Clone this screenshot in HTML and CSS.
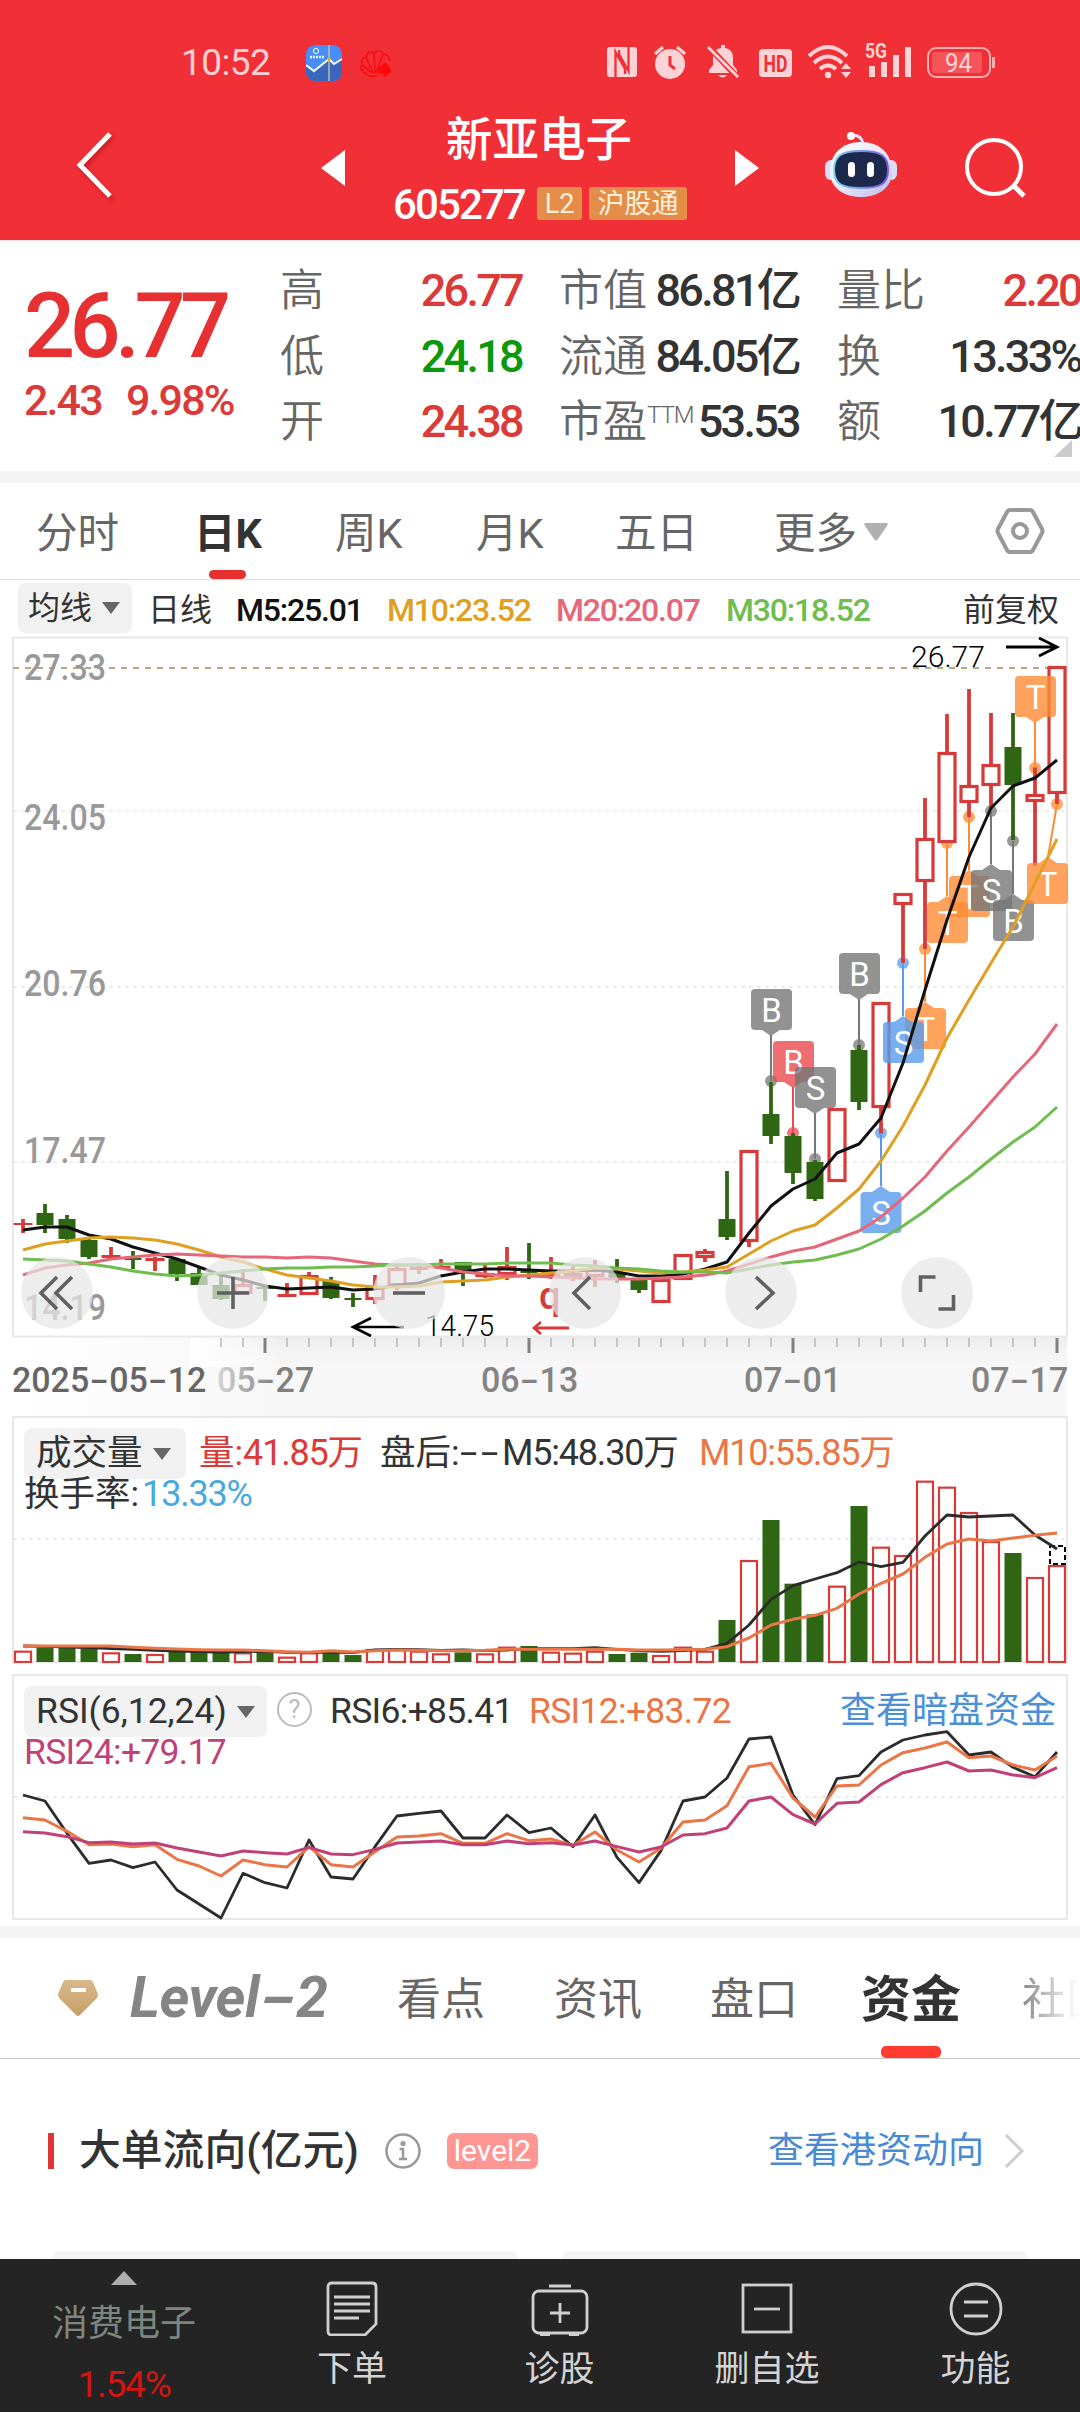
FILE: index.html
```html
<!DOCTYPE html>
<html lang="zh-CN">
<head>
<meta charset="utf-8">
<title>新亚电子 605277</title>
<link rel="stylesheet" href="styles.css">
</head>
<body>
<header class="top">
  <div class="status">
    <span class="clock">10:52</span>
    <svg class="app-icon" viewBox="0 0 36 36"><defs><clipPath id="rc"><rect width="36" height="36" rx="9"/></clipPath></defs><g clip-path="url(#rc)"><rect width="36" height="36" fill="#4a8df5"/><path d="M0 21l8 7 14-14 6 4 8-5v23H0z" fill="#3a66bb"/><path d="M0 20l8 6 15-12 5 5 8-5" fill="none" stroke="#fff" stroke-width="1.8"/><path d="M23 0v36" stroke="#d8d0a0" stroke-width="1.2"/></g><circle cx="10" cy="6" r="2.600" fill="none" stroke="#fff"/><path d="M4 12h14" stroke="#dff" stroke-width="2.400" stroke-dasharray="2 1"/><circle cx="23" cy="14" r="1.800" fill="#e8a030"/></svg>
    <svg class="fan-icon" viewBox="0 0 34 28"><g fill="none" stroke="#f80d12" stroke-width="1.700"><path d="M9 25C3 22 0 18 3 15l10 8M3 15c-1-5 1-8 4-8l7 16M7 7c1-5 5-6 8-4l1 20M15 3c4-3 8-2 9 1l-7 19M24 4c4 0 6 3 7 7M9 26h10"/></g><path d="M26 12c4 4 6 6 6 9 0 4-4 4-5 2l1 4h-4l1-4c-1 2-6 2-6-2 0-3 3-5 7-9z" fill="#ff0808"/></svg>
    <svg class="sys-icons" viewBox="0 0 400 40" fill="#ffd3d5">
      <rect x="2" y="6" width="30" height="30" rx="3"/><path d="M10.500 36V11l9.500 17v5M23.500 6v24L14 13V9" fill="none" stroke="#ef3038" stroke-width="2.300"/>
      <circle cx="65" cy="23" r="15"/><path d="M50 13l8-7M72 6l8 7" stroke="#ffd3d5" stroke-width="3"/><path d="M65 15v9l5 4" fill="none" stroke="#ef3038" stroke-width="3"/>
      <path d="M104 32v-3l4-5V17q0-9 8-10V4h4v3q8 1 8 10v7l4 5v3zM113 34h9q-4 5-9 0z"/><path d="M105 7l28 30" stroke="#f02f37" stroke-width="6"/><path d="M103 6l30 30" stroke="#ffd3d5" stroke-width="2.6"/>
      <rect x="154" y="8" width="33" height="28" rx="4"/><text x="158.500" y="31" textLength="24" lengthAdjust="spacingAndGlyphs" font-size="23" font-weight="700" fill="#ee3038">HD</text>
      <g fill="none" stroke="#ffd3d5" stroke-width="4"><path d="M204 15q19-18 38 0M209 22q14-13 28 0M215 28q8-7 16 0"/></g><circle cx="223" cy="34" r="3.200"/><path d="M236 28l5-6 5 6zM236 31h10l-5 6z"/>
      <text x="260" y="17" textLength="22" lengthAdjust="spacingAndGlyphs" font-size="20" font-weight="700">5G</text>
      <path d="M264 25h6v11h-6zM276 21h6v15h-6zM288 14h6v22h-6zM300 6h6v30h-6z"/>
      <rect x="323" y="7" width="62" height="29" rx="8" fill="none" stroke="#f9aeb1" stroke-width="2"/><rect x="327" y="11" width="50" height="21" rx="3" fill="#f6545b"/><path d="M387 16h3v11h-3z" fill="#f9aeb1"/>
      <text x="340" y="31" textLength="27" lengthAdjust="spacingAndGlyphs" font-size="25">94</text>
    </svg>
  </div>
  <div class="titlebar">
    <svg class="back" viewBox="0 0 40 68"><path d="M36 3L6 34l30 31" fill="none" stroke="#fff" stroke-width="5"/></svg>
    <svg class="arrow" viewBox="0 0 24 36"><path d="M24 0v36L0 18z" fill="#fff"/></svg>
    <div class="stock">
      <div class="name">新亚电子</div>
      <div class="code"><b>605277</b><i class="l2">L2</i><i class="hgt">沪股通</i></div>
    </div>
    <svg class="arrow next" viewBox="0 0 24 36"><path d="M0 0v36l24-18z" fill="#fff"/></svg>
    <svg class="robot" viewBox="0 0 72 68"><defs><linearGradient id="shell" x1="0" y1="0" x2="1" y2="1"><stop offset="0" stop-color="#fff"/><stop offset=".5" stop-color="#e9e8fb"/><stop offset="1" stop-color="#bcb9e8"/></linearGradient><linearGradient id="edge"><stop offset="0" stop-color="#79d5ef"/><stop offset="1" stop-color="#7554de"/></linearGradient></defs><path d="M27 4q10 0 11 9" fill="none" stroke="#e5e2f5" stroke-width="3"/><circle cx="26" cy="5" r="4" fill="#fff"/><rect x="0" y="29" width="72" height="20" rx="6" fill="#dddcf8"/><path d="M36 11C55 11 67 23 67 41 67 56 54 66 36 66S5 56 5 41C5 23 17 11 36 11z" fill="url(#shell)"/><path d="M36 20c20 0 27 5 27 19S55 57 36 57 9 53 9 39s7-19 27-19z" fill="#1c284c" stroke="url(#edge)" stroke-width="2"/><rect x="23" y="31" width="7" height="15" rx="3.500" fill="#fff"/><rect x="42" y="31" width="7" height="15" rx="3.500" fill="#fff"/></svg>
    <svg class="search" viewBox="0 0 62 62"><circle cx="29" cy="30" r="27" fill="none" stroke="#fff" stroke-width="4"/><path d="M48 48l11 11" stroke="#fff" stroke-width="5"/></svg>
  </div>
</header>

<section class="quote">
  <div class="price">
    <div class="last">26.77</div>
    <div class="chg"><span>2.43</span><span>9.98%</span></div>
  </div>
  <dl class="col c1">
    <div><dt>高</dt><dd class="up">26.77</dd></div>
    <div><dt>低</dt><dd class="down">24.18</dd></div>
    <div><dt>开</dt><dd class="up">24.38</dd></div>
  </dl>
  <dl class="col c2">
    <div><dt>市值</dt><dd>86.81亿</dd></div>
    <div><dt>流通</dt><dd>84.05亿</dd></div>
    <div><dt>市盈<sup>TTM</sup></dt><dd>53.53</dd></div>
  </dl>
  <dl class="col c3">
    <div><dt>量比</dt><dd class="up">2.20</dd></div>
    <div><dt>换</dt><dd>13.33%</dd></div>
    <div><dt>额</dt><dd>10.77亿</dd></div>
  </dl>
  <svg class="corner" viewBox="0 0 18 17"><path d="M18 0v17H0z" fill="#ccc"/></svg>
</section>

<nav class="periods">
  <span>分时</span><span class="on">日K</span><span>周K</span><span>月K</span><span>五日</span>
  <span class="more">更多<svg viewBox="0 0 24 18"><path d="M2 0h20q3 0 1 3l-9 13q-2 3-4 0L1 3q-2-3 1-3z" fill="#b0b0b0"/></svg></span>
  <svg class="hex" viewBox="0 0 50 48"><path d="M15 3h20q2 0 3 2l9 17q1 2 0 4l-9 17q-1 2-3 2H15q-2 0-3-2L3 26q-1-2 0-4l9-17q1-2 3-2z" fill="none" stroke="#999" stroke-width="4"/><circle cx="25" cy="24" r="7" fill="none" stroke="#999" stroke-width="4"/></svg>
</nav>

<div class="ma">
  <span class="pick">均线<svg viewBox="0 0 18 12"><path d="M0 0h18L9 12z" fill="#666"/></svg></span>
  <span class="day">日线</span>
  <span class="m5">M5:25.01</span><span class="m10">M10:23.52</span><span class="m20">M20:20.07</span><span class="m30">M30:18.52</span>
  <span class="adj">前复权</span>
</div>

<section class="kline"><svg id="kline" width="1080" height="780" viewBox="0 636 1080 780"></svg></section>

<section class="panel vol">
  <svg id="volume" width="1080" height="258" viewBox="0 1416 1080 258"></svg>
  <div class="legend">
    <div class="line"><span class="pick">成交量<svg viewBox="0 0 18 12"><path d="M0 0h18L9 12z" fill="#666"/></svg></span><span class="v1">量:<em>41.85</em>万</span><span class="v2">盘后:<em class="dash">--</em></span><span class="v3"><em>M5:48.30</em>万</span><span class="v4"><em>M10:55.85</em>万</span></div>
    <div class="line2">换手率:<em class="rate">13.33%</em></div>
  </div>
</section>

<section class="panel rsi">
  <svg id="rsi" width="1080" height="252" viewBox="0 1674 1080 252"></svg>
  <div class="legend">
    <div class="line"><span class="pick">RSI(6,12,24)<svg viewBox="0 0 18 12"><path d="M0 0h18L9 12z" fill="#666"/></svg></span><span class="help">?</span><span class="r1">RSI6:+85.41</span><span class="r2">RSI12:+83.72</span><span class="dark">查看暗盘资金</span></div>
    <div class="line2 r3">RSI24:+79.17</div>
  </div>
</section>

<nav class="tabs">
  <svg class="gem" viewBox="0 0 40 36"><defs><linearGradient id="gold" x2="0" y2="1"><stop stop-color="#d9b98c"/><stop offset="1" stop-color="#c69f66"/></linearGradient></defs><path d="M8 0h24q2 0 3 2l5 12q0 2-1 4L22 35q-2 2-4 0L1 18q-1-2-1-4L5 2q1-2 3-2z" fill="url(#gold)"/><rect x="13" y="8" width="15" height="4" rx="1" fill="#fff"/></svg>
  <span class="lv">Level<em>-</em>2</span><span>看点</span><span>资讯</span><span>盘口</span><span class="on">资金</span><span class="fade">社区</span>
</nav>

<section class="flow">
  <div class="flow-head">
    <span class="mark"></span><h2>大单流向(亿元)</h2>
    <svg class="info" viewBox="0 0 36 36"><circle cx="18" cy="18" r="16.500" fill="none" stroke="#999" stroke-width="2.500"/><circle cx="18" cy="10.500" r="2.600" fill="#999"/><path d="M14.500 16H18v10M14 26h8" fill="none" stroke="#999" stroke-width="2.500"/></svg>
    <span class="badge">level2</span>
    <span class="link">查看港资动向</span>
    <svg class="go" viewBox="0 0 20 34"><path d="M2 1l16 16L2 33" fill="none" stroke="#ccc" stroke-width="3"/></svg>
  </div>
  <div class="cards"><div></div><div></div></div>
</section>

<footer class="bar">
  <div class="sector"><svg viewBox="0 0 26 14"><path d="M13 0l13 14H0z" fill="#aeaeae"/></svg><span>消费电子</span><b>1.54%</b></div>
  <div class="item"><svg viewBox="0 0 60 56"><g fill="none" stroke="#d0d0d0" stroke-width="2.800"><path d="M10 3h40q4 0 4 4v37L43 55H10q-4 0-4-4V7q0-4 4-4z"/><path d="M12 17h36M12 24h36M12 31h36M12 38h25"/></g></svg><span>下单</span></div>
  <div class="item"><svg viewBox="0 0 60 56"><g fill="none" stroke="#d0d0d0" stroke-width="2.800"><rect x="3" y="11" width="54" height="42" rx="6"/><path d="M19 6h22M30 23v20M20 33h20"/><path d="M10 54h10M39 54h10" stroke-width="4"/></g></svg><span>诊股</span></div>
  <div class="item"><svg viewBox="0 0 60 56"><g fill="none" stroke="#d0d0d0" stroke-width="2.800"><rect x="6" y="5" width="48" height="47"/><path d="M17 29h26"/></g></svg><span>删自选</span></div>
  <div class="item"><svg viewBox="0 0 60 56"><g fill="none" stroke="#d0d0d0" stroke-width="2.800"><circle cx="30" cy="29" r="25"/><path d="M18 22h24M18 36h24"/></g></svg><span>功能</span></div>
</footer>
<script src="charts.js"></script>
</body>
</html>
```
FILE: styles.css
```css
* { box-sizing: border-box; margin: 0; padding: 0; }
body {
  width: 1080px; height: 2412px; overflow: hidden;
  display: flex; flex-direction: column;
  background: #fff; color: #333;
  font-family: Roboto, "Noto Sans CJK SC", sans-serif;
  white-space: nowrap;
}
svg { display: block; }
svg text { font-family: Roboto, "Noto Sans CJK SC", sans-serif; }
em, i { font-style: normal; }

/* red header */
.top { height: 240px; background: #f12f37; color: #fff; flex: none; }
.status { height: 100px; padding-top: 23px; display: grid; grid-template-columns: 181px 125px 53px 246px 400px; align-items: center; }
.clock { grid-column: 2; font-size: 37px; line-height: 80px; color: #ffd0d2; letter-spacing: -.600px; }
.app-icon { width: 36px; height: 36px; }
.fan-icon { width: 34px; height: 28px; margin-top: 2px; }
.sys-icons { width: 400px; height: 40px; margin-top: -4px; }
.titlebar { height: 140px; display: grid; grid-template-columns: 74px 247px 71px 343px 90px 140px 62px; align-items: start; }
.back { grid-column: 2; width: 40px; height: 68px; margin-top: 31px; filter: drop-shadow(2px 3px 2px rgba(120,0,0,.35)); }
.arrow { width: 24px; height: 36px; margin-top: 50px; }
.name { font-size: 46.500px; line-height: 56px; font-weight: 500; padding: 12px 0 0 54px; }
.code { display: flex; align-items: center; margin-top: 19px; height: 33px; }
.code b { font-size: 42px; font-weight: 500; letter-spacing: -1.900px; width: 144px; padding: 2px 0 0 1px; margin-right: 1px; }
.code i { height: 33px; line-height: 34px; border-radius: 3px; background: #e38d49; color: #fff1dc; font-size: 27px; text-align: center; }
.l2 { width: 45px; margin-right: 7px; }
.hgt { width: 98px; }
.robot { width: 72px; height: 68px; margin-top: 31px; }
.search { width: 62px; height: 62px; margin-top: 37px; }

/* quote summary */
.quote { height: 243px; flex: none; border-bottom: 12px solid #f4f4f4; border-top: 1px solid #fde0e1; display: grid; grid-template-columns: 280px 241px 38px 240px 38px 243px; position: relative; }
.last { font-size: 90px; line-height: 90px; font-weight: 500; color: #e63031; letter-spacing: -5.600px; padding: 41px 0 0 24px; }
.chg { display: grid; grid-template-columns: 102px 130px; padding-left: 24px; font-size: 43px; line-height: 50px; font-weight: 500; color: #dc3a38; letter-spacing: -1.900px; margin-top: 3px; }
.col { padding-top: 17px; }
.col div { height: 65.500px; display: flex; justify-content: space-between; line-height: 66px; }
.c2 { grid-column: 4; }
.c3 { grid-column: 6; }
dt { font-size: 44px; color: #666; font-weight: 350; }
dd { font-size: 45px; font-weight: 500; letter-spacing: -2.700px; color: #333; }
.c1 dd, .c3 dd { margin-right: -1px; }
dt sup { font-size: 24px; line-height: 20px; vertical-align: 14px; font-weight: 300; letter-spacing: -1px; }
.up { color: #dc3a38; }
.down { color: #0c980c; }
.corner { position: absolute; right: 8px; bottom: 14px; width: 18px; height: 17px; }

/* period tabs */
.periods { height: 97px; flex: none; border-bottom: 1px solid #ddd; display: grid; grid-template-columns: 36px 158px 141px 141px 139px 159px 221px 50px; font-size: 41.500px; line-height: 101px; color: #666; }
.periods span:first-child { grid-column: 2; }
.periods .on { color: #333; font-weight: 700; width: 70px; position: relative; }
.periods .on::after { content: ""; position: absolute; left: 15px; top: 87px; width: 37px; height: 9px; border-radius: 5px; background: #e63030; }
.more { display: flex; align-items: center; }
.more svg { width: 24px; height: 18px; margin: -4px 0 0 7px; }
.hex { width: 50px; height: 48px; margin-top: 24px; }

/* moving averages */
.ma { height: 56px; flex: none; padding: 3px 0 3px 18px; display: grid; grid-template-columns: 130px 88px 151px 169px 170px 237px 110px; font-size: 32px; line-height: 54px; color: #333; }
.pick { background: #f1f1f1; border-radius: 8px; display: flex; align-items: center; }
.pick svg { width: 18px; height: 12px; margin-left: 10px; }
.ma .pick { width: 114px; height: 50px; padding-left: 10px; }
.ma [class^="m"] { letter-spacing: -1.200px; font-weight: 500; }
.m5 { color: #111; }
.m10 { color: #dfa022; }
.m20 { color: #e5677a; }
.m30 { color: #6fbd4e; }

.kline { height: 780px; flex: none; }

/* indicator panels */
.panel { display: grid; flex: none; }
.panel > * { grid-area: 1 / 1; }
.vol { height: 258px; }
.rsi { height: 252px; }
.legend { padding: 12px 0 0 24px; font-size: 35.500px; }
.line { display: grid; height: 47px; line-height: 51px; }
.vol .line { grid-template-columns: 175px 181px 122px 197px 200px; }
.rsi .line { grid-template-columns: 253px 53px 199px 311px 220px; }
.vol .pick { width: 162px; padding-left: 12px; }
.rsi .pick { width: 243px; padding-left: 12px; }
.vol em { letter-spacing: -1.200px; font-size: 36px; }
.vol .dash { display: inline-block; letter-spacing: 2px; transform: scaleX(1.75); transform-origin: left; }
.v1 { color: #dc3a38; }
.v4, .r2 { color: #ea7647; }
.line2 { line-height: 38px; }
.vol .rate { color: #4aa8e0; margin-left: 3px; }
.help { width: 35px; height: 35px; border: 2.500px solid #bbb; border-radius: 50%; color: #bbb; font-size: 25px; line-height: 31px; text-align: center; margin-top: 6px; }
.r1, .r2, .r3 { letter-spacing: -.700px; }
.r3 { color: #c24078; }
.dark { color: #4a8fd8; font-size: 36px; }

/* content tabs */
.tabs { height: 133px; flex: none; border-top: 12px solid #f4f4f4; border-bottom: 1px solid #c6c6c6; display: grid; grid-template-columns: 58px 72px 267px 157px 156px 151px 161px 58px; font-size: 44px; line-height: 125px; color: #666; }
.gem { grid-column: 2; width: 40px; height: 36px; margin-top: 42px; }
.lv { font-style: italic; font-weight: 700; font-size: 57px; line-height: 120px; color: #858585; letter-spacing: -.500px; }
.lv em { display: inline-block; font-style: italic; transform: scaleX(1.8); transform-origin: left; margin-right: 16px; }
.tabs .on { font-size: 50px; font-weight: 700; color: #333; position: relative; width: 99px; }
.tabs .on::after { content: ""; position: absolute; left: 20px; top: 108px; width: 60px; height: 12px; border-radius: 5px; background: #ff3b30; }
.fade { overflow: hidden; background: linear-gradient(90deg, #888, #eee 80%, #fff); -webkit-background-clip: text; background-clip: text; color: transparent; }

/* capital flow */
.flow { height: 200px; flex: none; display: flex; flex-direction: column; justify-content: space-between; }
.flow-head { display: grid; grid-template-columns: 48px 31px 306px 62px 321px 236px 20px; align-items: center; height: 60px; margin-top: 61px; }
.mark { grid-column: 2; width: 6px; height: 36px; background: #e03535; }
.flow h2 { font-size: 41.800px; font-weight: 500; line-height: 60px; padding-top: 1px; }
.info { width: 36px; height: 36px; }
.badge { width: 91px; height: 36px; border-radius: 7px; background: #ff9693; color: #fff; font-size: 30px; line-height: 36px; text-align: center; }
.link { color: #4a8ad4; font-size: 36px; line-height: 56px; }
.go { width: 20px; height: 34px; }
.cards { display: grid; grid-template-columns: 466px 466px; gap: 44px; padding-left: 52px; }
.cards div { height: 8px; background: #f5f5f5; border-radius: 14px 14px 0 0; }

/* bottom bar */
.bar { height: 153px; flex: none; background: #242424; color: #d4d4d4; display: grid; grid-template-columns: 248px 208px 207px 208px 209px; font-size: 35px; }
.bar div { display: flex; flex-direction: column; align-items: center; }
.sector svg { width: 26px; height: 14px; margin-top: 12px; }
.sector span { font-size: 36px; line-height: 44px; margin-top: 17px; color: #7e877f; }
.sector b { font-size: 37px; line-height: 44px; margin-top: 17px; font-weight: 400; color: #d51512; letter-spacing: -1.200px; }
.item svg { width: 60px; height: 56px; margin-top: 21px; }
.item span { line-height: 44px; margin-top: 12px; }
```
FILE: charts.js
```js
const X = i => 23 + 22 * i;
const RED = '#d63a39', GREEN = '#2f6614';
const put = (id, s) => { document.getElementById(id).innerHTML = s; };
const poly = (ys, color, w) =>
  `<polyline fill="none" stroke="${color}" stroke-width="${w}" stroke-linejoin="round" points="${ys.map((y, i) => X(i) + ',' + y).join(' ')}"/>`;
const text = (x, y, w, size, color, s, extra = '') =>
  `<text x="${x}" y="${y}" textLength="${w}" lengthAdjust="spacingAndGlyphs" font-size="${size}" fill="${color}" ${extra}>${s}</text>`;
/* date label whose hyphens are stretched to the digit width */
const date = (x, s, color) => {
  let out = `<text y="1391.5" font-size="35" font-weight="500" fill="${color}">`;
  s.split(/(-)/).forEach(p => {
    const w = p === '-' ? 19 : p.length * 19.3;
    out += `<tspan x="${x}" textLength="${w}" lengthAdjust="spacingAndGlyphs">${p}</tspan>`;
    x += w + 0.5;
  });
  return out + '</text>';
};

/* colour, high, body top, body bottom, low */
const candles = [
  ['r',1219,1223,1224,1233],['g',1204,1213,1225,1233],['g',1215,1219,1239,1243],['g',1239,1240,1257,1259],
  ['r',1247,1255,1257,1259],['g',1251,1258,1260,1269],['r',1257,1258,1260,1271],['g',1259,1259,1274,1281],
  ['g',1268,1273,1285,1285],['g',1276,1285,1299,1300],['r',1269,1284,1294,1294],['g',1287,1287,1289,1301],
  ['r',1283,1294,1296,1296],['r',1272,1275,1295,1295],['g',1277,1281,1298,1299],['g',1293,1298,1300,1307],
  ['r',1275,1287,1300,1304],['r',1266,1268,1286,1290],['r',1263,1267,1269,1274],['r',1259,1266,1268,1269],
  ['g',1262,1262,1270,1286],['r',1265,1273,1277,1278],['r',1247,1266,1275,1280],['g',1243,1271,1273,1279],
  ['r',1257,1272,1275,1279],['r',1265,1273,1277,1281],['r',1260,1269,1277,1287],['g',1259,1272,1279,1283],
  ['g',1278,1280,1290,1293],['r',1279,1279,1303,1303],['r',1254,1254,1280,1280],['r',1249,1251,1258,1262],
  ['g',1171,1219,1237,1240],['r',1150,1150,1242,1247],['g',1082,1114,1136,1144],['g',1133,1136,1173,1184],
  ['g',1160,1162,1199,1201],['r',1108,1108,1182,1182],['g',1045,1050,1102,1110],['r',1002,1002,1108,1134],
  ['r',893,893,905,963],['r',798,838,882,949],['r',714,752,843,843],['r',689,785,803,817],
  ['r',713,764,786,810],['g',713,747,785,840],['r',767,794,802,866],['r',666,666,794,804]
];
const m5 = [1230,1227,1227,1235,1239,1247,1253,1259,1267,1275,1280,1286,1289,1288,1287,1290,1289,1285,1283,1276,1272,1269,1269,1270,1271,1271,1270,1272,1276,1276,1274,1269,1262,1233,1206,1189,1179,1153,1144,1118,1063,990,920,857,808,786,778,760];
const m10 = [1250,1244,1241,1238,1237,1238,1240,1244,1250,1257,1262,1269,1275,1278,1281,1285,1287,1287,1286,1282,1281,1280,1277,1275,1273,1271,1268,1269,1271,1273,1272,1270,1267,1254,1241,1231,1225,1208,1189,1161,1126,1085,1038,1000,963,927,883,839];
const m20 = [1275,1268,1265,1263,1259,1257,1255,1254,1255,1256,1257,1257,1258,1257,1258,1261,1264,1265,1265,1268,1272,1274,1276,1276,1277,1278,1279,1279,1279,1278,1277,1275,1271,1264,1257,1251,1247,1239,1231,1217,1198,1177,1151,1127,1102,1077,1054,1024];
const m30 = [1259,1260,1261,1264,1267,1271,1274,1276,1275,1273,1271,1269,1268,1268,1267,1267,1266,1265,1265,1264,1264,1264,1263,1263,1263,1265,1266,1268,1269,1271,1272,1272,1273,1269,1265,1262,1260,1255,1249,1239,1226,1211,1193,1177,1159,1142,1127,1107];

/* trade marks: letter, colour, box x, box y, candle, dot y */
const marks = [
  ['B','#777',751,989,34,1081],['B','#ea4b4e',773,1041,35,1133],['S','#777',795,1067,36,1159],['B','#777',839,953,38,1045],
  ['T','#ff8c35',905,1008,41,949],['S','#5a9cec',883,1022,40,963],['S','#5a9cec',860.5,1192,39,1133],
  ['T','#ff8c35',949,876,43,817],['T','#ff8c35',927,902,42,843],['S','#777',971,870,44,811],['B','#777',993,900,45,841],
  ['T','#ff8c35',1015,676,46,768],['T','#ff8c35',1027,863,47,804]
];

let k = '<defs><linearGradient id="ax"><stop offset="0" stop-color="#fff"/><stop offset=".25" stop-color="#f7f7f7"/><stop offset="1" stop-color="#f7f7f7"/></linearGradient><linearGradient id="ay" x2="0" y2="1"><stop offset="0" stop-color="#e9e9e9" stop-opacity=".7"/><stop offset=".6" stop-color="#fff" stop-opacity="0"/></linearGradient><linearGradient id="am"><stop offset="0" stop-color="#fff"/><stop offset=".3" stop-color="#fff" stop-opacity="0"/></linearGradient><linearGradient id="fd" gradientUnits="userSpaceOnUse" x1="212" x2="275"><stop offset="0" stop-color="#ddd"/><stop offset="1" stop-color="#808080"/></linearGradient></defs>';
k += '<rect x="13" y="1337" width="1054" height="80" fill="url(#ax)"/><rect x="190" y="1337" width="877" height="80" fill="url(#ay)"/><rect x="190" y="1337" width="300" height="30" fill="url(#am)"/>';
k += '<rect x="13" y="637.5" width="1054" height="699" fill="#fff" stroke="#e8e8e8" stroke-width="2"/>';
[[811, '#ddd', 1], [987, '#e5e5e5', 1.5], [1162, '#ddd', 1]].forEach(([y, c, w]) => {
  k += `<path d="M13 ${y}H1067" stroke="${c}" stroke-width="${w}" stroke-dasharray="4 4"/>`;
});
k += '<path d="M13 668H1048" stroke="#b9a77e" stroke-width="2" stroke-dasharray="6 6"/>';
[['27.33', 680], ['24.05', 829.5], ['20.76', 996], ['17.47', 1162.5], ['14.19', 1320]].forEach(([s, y]) => {
  k += text(24, y, 82, 36, '#999', s, 'font-weight="500"');
});
marks.forEach(([, c, , , i, y]) => { k += `<circle cx="${X(i)}" cy="${y}" r="6" fill="${c}" opacity=".75"/>`; });
candles.forEach(([c, h, a, b, l], i) => {
  const x = X(i), f = c === 'r' ? RED : GREEN;
  if (h < a) k += `<path d="M${x} ${h}V${a}" stroke="${f}" stroke-width="3.8"/>`;
  if (l > b) k += `<path d="M${x} ${b}V${l}" stroke="${f}" stroke-width="3.8"/>`;
  if (c === 'g') k += `<rect x="${x - 8.5}" y="${a}" width="17" height="${b - a}" fill="${f}"/>`;
  else if (b - a < 4) k += `<rect x="${x - 9.5}" y="${a}" width="19" height="${b - a + 1}" fill="${f}"/>`;
  else k += `<rect x="${x - 8}" y="${a + 1.5}" width="16" height="${b - a - 3}" fill="#fff" stroke="${f}" stroke-width="3.2"/>`;
});
marks.forEach(([s, c, bx, by, i, y]) => {
  const x = X(i), down = y > by, px = i === 47 ? 1048 : x, e = down ? by + 46 : by - 6;
  k += `<path d="M${px} ${e}L${x} ${y}" stroke="${c}" stroke-width="2"/>`;
  k += `<g opacity=".8"><rect x="${bx}" y="${by}" width="41" height="41" rx="4" fill="${c}"/><path d="${down ? `M${px - 9} ${by + 41}h18l-9 6z` : `M${px - 9} ${by}h18l-9-6z`}" fill="${c}"/></g>`;
  k += `<text x="${bx + 20.5}" y="${by + 33}" text-anchor="middle" font-size="33" fill="#fff">${s}</text>`;
});
k += poly(m5, '#111', 3) + poly(m10, '#dfa022', 3) + poly(m20, '#e5677a', 3) + poly(m30, '#6fbd4e', 3);
k += text(911, 667, 74, 30, '#000', '26.77', 'font-weight="300"') + '<path d="M1006 647H1056M1039 638L1057 647L1039 656" fill="none" stroke="#000" stroke-width="2.8"/>';
k += text(425, 1336, 69, 29, '#000', '14.75', 'font-weight="300"') + '<path d="M404 1327H353M371 1318L353 1327L371 1336" fill="none" stroke="#000" stroke-width="2.6"/>';
k += '<text x="539" y="1309" font-size="38" font-weight="500" fill="#d63a39">q</text><path d="M569 1328H534M541 1322L534 1328L541 1334" fill="none" stroke="#d63a39" stroke-width="2.8"/>';

const glyph = {
  57: 'M57 1277l-16 16 16 16M72 1277l-16 16 16 16',
  233: 'M217 1293h32M233 1277v32',
  409: 'M393 1293h32',
  585: 'M590 1277l-16 16 16 16',
  761: 'M756 1277l17 16-17 16',
  937: 'M920.500 1292v-15h15M953.500 1295v14h-15'
};
Object.entries(glyph).forEach(([x, d]) => {
  k += `<circle cx="${x}" cy="1293" r="36" fill="#e6e6e6" opacity=".72"/><path d="${d}" fill="none" stroke="#606060" stroke-width="3.6"/>`;
});
for (let i = 9; i < 48; i++) {
  k += (i - 11) % 12 === 0
    ? `<path d="M${X(i)} 1338v15" stroke="#808080" stroke-width="3"/>`
    : `<path d="M${X(i)} 1338v9" stroke="#aaa" stroke-width="1.2"/>`;
}
k += date(12, '2025-05-12', '#666') + date(217, '05-27', 'url(#fd)');
[['06-13', 481], ['07-01', 744], ['07-17', 971]].forEach(([s, x]) => { k += date(x, s, '#848484'); });
put('kline', k);

/* volume: bar tops and averages, in thirds of a pixel from y = 1410 */
const bars = 'r722 g712 g712 g715 r727 g732 r732 g722 g725 g727 r727 g727 r740 r727 g722 g735 r717 r717 r722 r730 g727 r730 r710 g708 r725 r728 r722 g732 g728 r735 r710 r722 g630 r450 g330 g521 g613 r527 g288 r410 r435 r212 r230 r306 r393 g429 r501 r465'.split(' ');
const v5 = [708,709,711,713,716,718,721,723,725,727,725,724,727,727,726,728,720,718,719,721,720,722,720,716,716,716,713,718,722,724,722,718,700,645,568,527,507,488,456,470,457,378,315,321,318,315,375,417];
const v10 = [708,708,708,708,708,712,715,717,719,720,720,722,725,727,722,726,722,720,721,722,722,721,718,718,718,718,718,718,720,720,719,718,710,684,645,628,616,595,552,520,492,442,402,387,393,384,376,369];
const vy = v => 1410 + v / 3;
let v = '<rect x="13" y="1417" width="1054" height="245" fill="none" stroke="#e8e8e8" stroke-width="2"/><path d="M13 1539H1067" stroke="#e5e5e5" stroke-width="1.5" stroke-dasharray="4 4"/>';
bars.forEach((b, i) => {
  const y = vy(+b.slice(1)), x = X(i);
  v += b[0] === 'g'
    ? `<rect x="${x - 8.5}" y="${y}" width="17" height="${1662 - y}" fill="${GREEN}"/>`
    : `<rect x="${x - 8}" y="${y + 1}" width="16" height="${1661 - y}" fill="#fff" stroke="${RED}" stroke-width="2.2"/>`;
});
v += '<rect x="1050" y="1546" width="15" height="18" fill="#fff" stroke="#000" stroke-width="2" stroke-dasharray="5 3"/>';
v += poly(v5.map(vy), '#2b2b2b', 2.8) + poly(v10.map(vy), '#ea7647', 3);
put('volume', v);

const ry = n => 1660 + n / 3;
const r6 = [405,423,520,610,600,623,606,690,732,774,640,668,684,540,651,657,560,468,460,453,534,534,465,518,504,560,465,592,668,572,423,411,354,237,231,405,494,356,347,276,240,225,215,285,276,322,350,276];
const r12 = [473,480,514,554,552,560,554,598,618,648,600,614,621,560,614,621,575,531,528,521,550,550,521,542,537,556,516,570,606,565,486,480,437,320,310,414,471,378,375,315,278,264,246,293,288,315,330,288];
const r24 = [515,519,530,548,546,552,549,564,576,588,573,578,582,562,582,584,568,549,546,543,554,554,543,551,548,555,543,560,576,561,525,521,504,423,411,464,492,430,426,374,338,323,306,333,330,345,353,323];
put('rsi', '<rect x="13" y="1675" width="1054" height="244" fill="none" stroke="#e8e8e8" stroke-width="2"/><path d="M13 1797H1067" stroke="#e5e5e5" stroke-width="1.5" stroke-dasharray="4 4"/>'
  + poly(r6.map(ry), '#2b2b2b', 2.8) + poly(r12.map(ry), '#ea7647', 3) + poly(r24.map(ry), '#c24078', 3));
```
